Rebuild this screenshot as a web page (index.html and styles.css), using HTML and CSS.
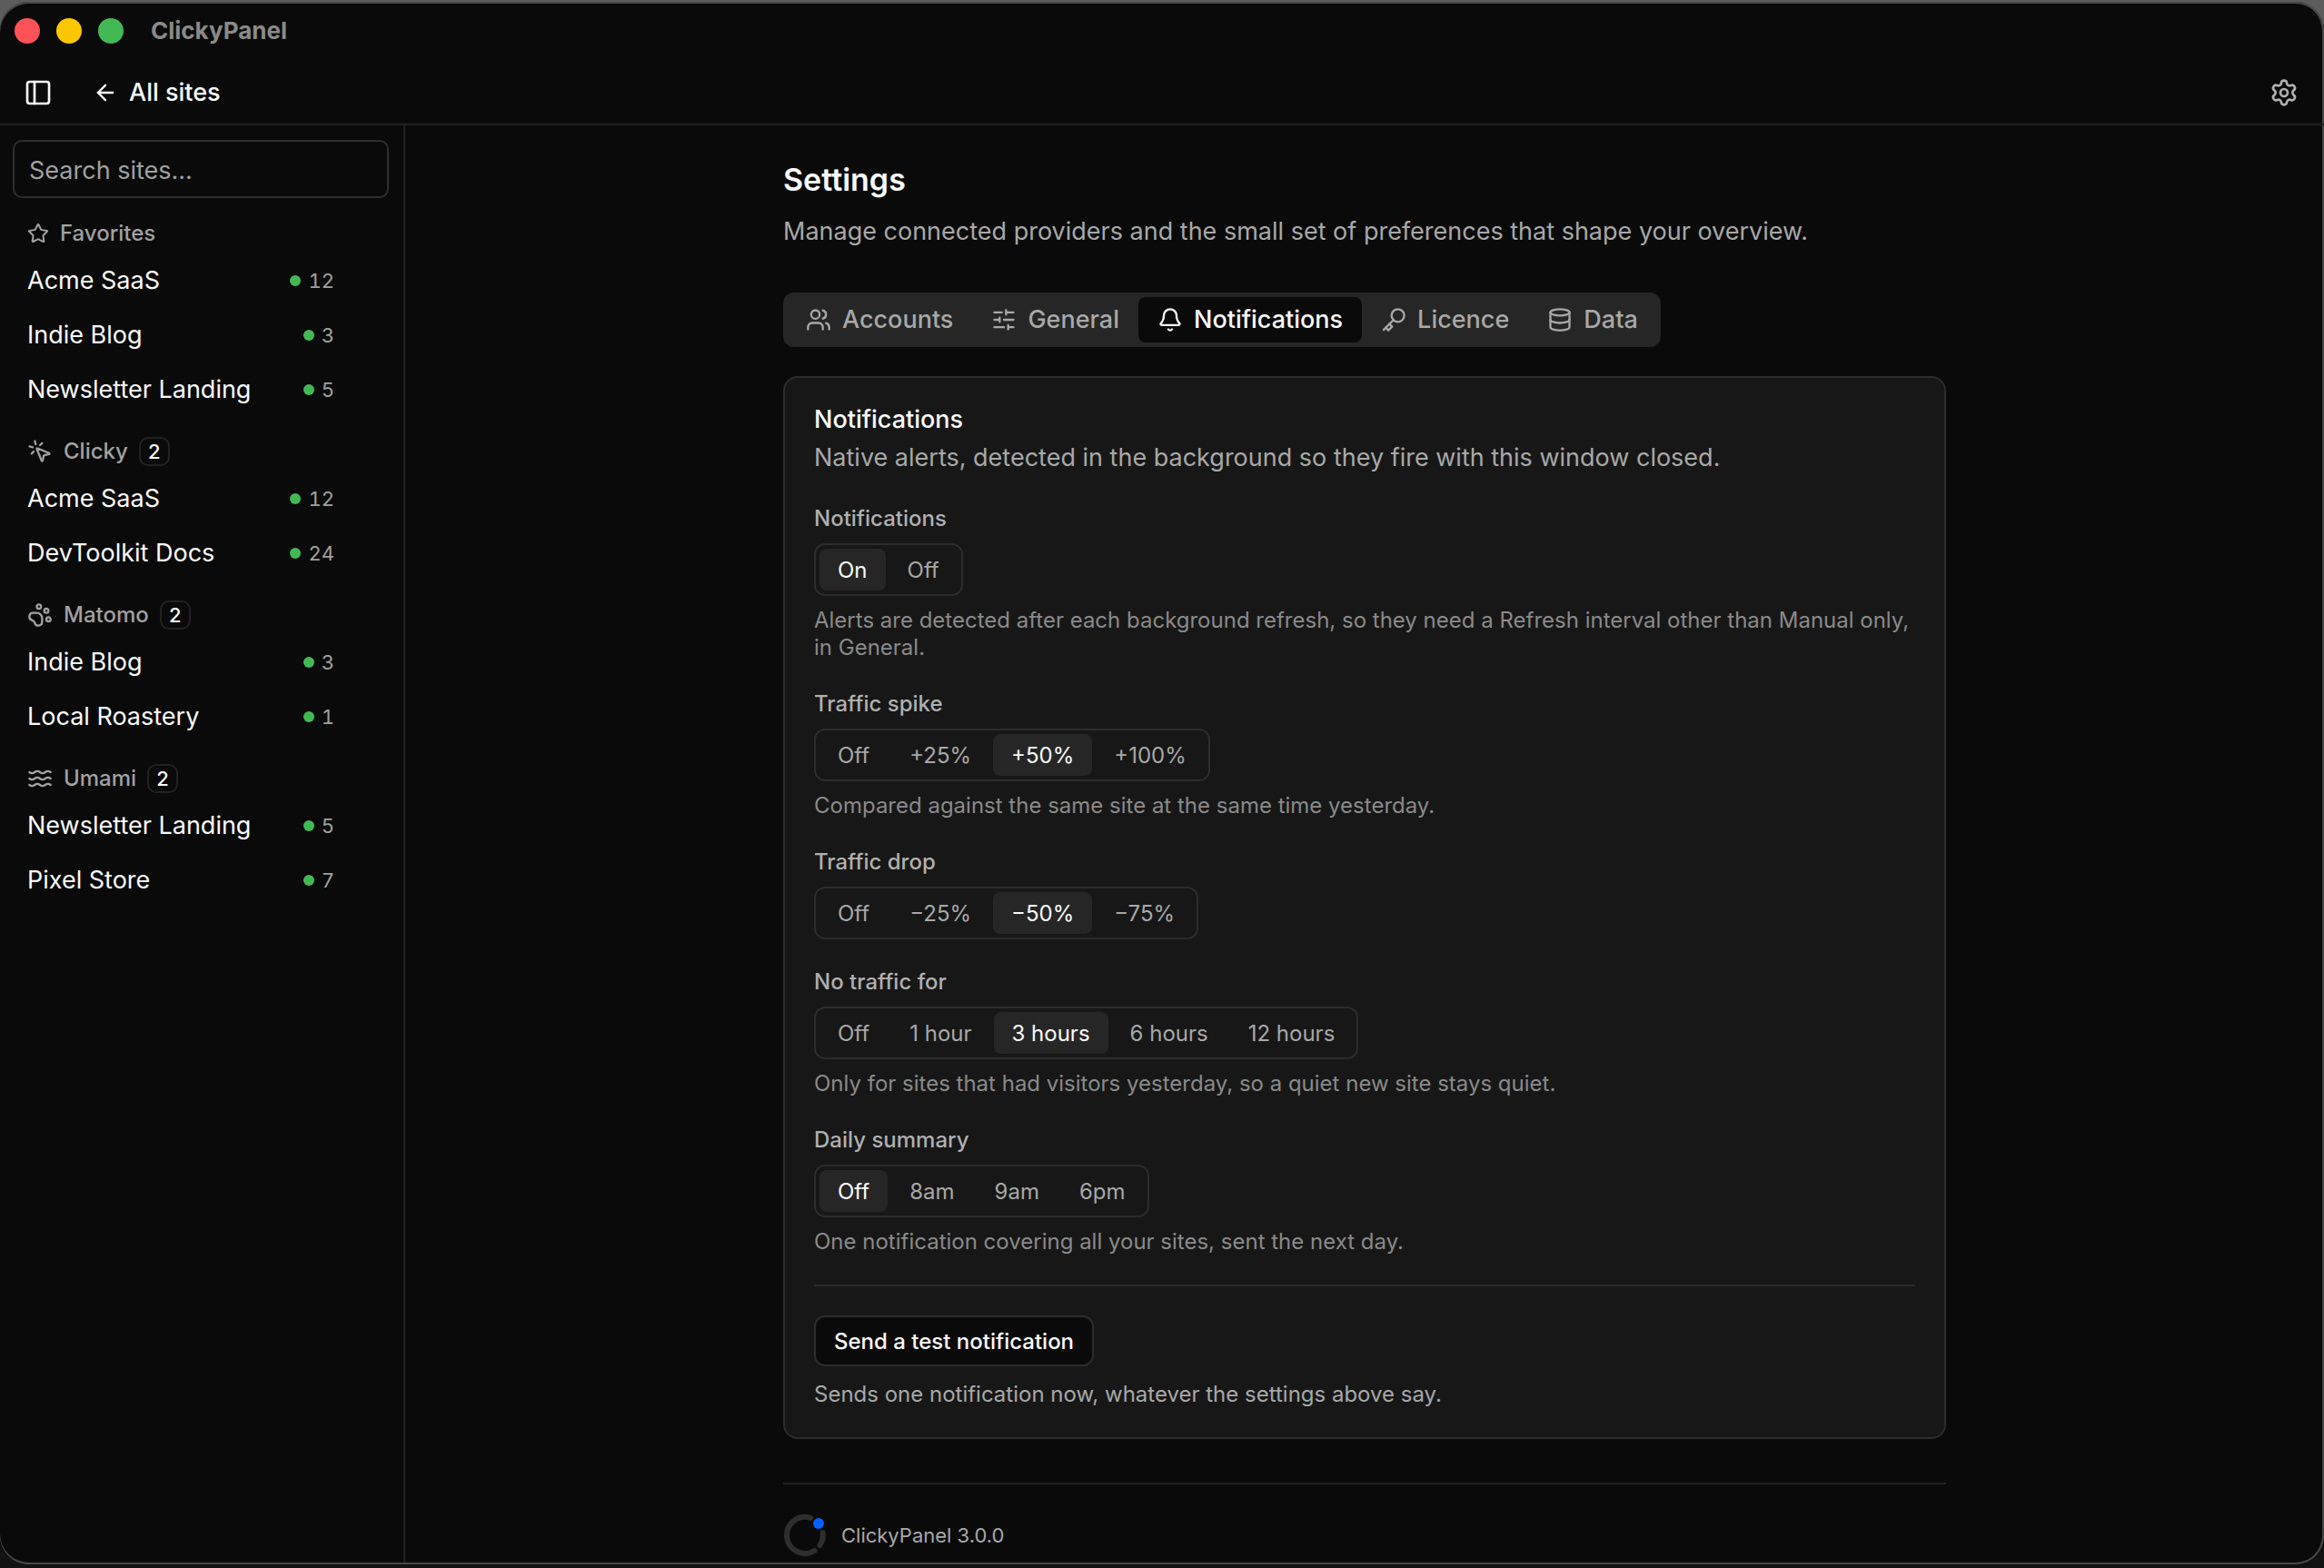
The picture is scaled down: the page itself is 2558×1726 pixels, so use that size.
FILE: index.html
```html
<!DOCTYPE html>
<html lang="en">
  <head>
    <meta charset="UTF-8" />
    <meta name="viewport" content="width=device-width, initial-scale=1.0" />
    <title>ClickyPanel</title>
    <link rel="stylesheet" href="styles.css">
  </head>
  <body>
    <div class="window">
      <header class="topbar">
        <div class="titlebar">
          <span class="light light-close"></span>
          <span class="light light-min"></span>
          <span class="light light-max"></span>
          <span class="app-title">ClickyPanel</span>
        </div>
        <div class="toolbar">
          <button class="icon-button" aria-label="Toggle sidebar">
            <svg class="icon icon-lg" viewBox="0 0 24 24"><rect x="3" y="3" width="18" height="18" rx="2" /><path d="M9 3v18" /></svg>
          </button>
          <a class="back-link" href="#">
            <svg class="icon" viewBox="0 0 24 24"><path d="m12 19-7-7 7-7" /><path d="M19 12H5" /></svg>
            All sites
          </a>
          <button class="icon-button settings-button" aria-label="Settings">
            <svg class="icon icon-lg" viewBox="0 0 24 24"><path d="M9.671 4.136a2.34 2.34 0 0 1 4.659 0 2.34 2.34 0 0 0 3.319 1.915 2.34 2.34 0 0 1 2.33 4.033 2.34 2.34 0 0 0 0 3.831 2.34 2.34 0 0 1-2.33 4.033 2.34 2.34 0 0 0-3.319 1.915 2.34 2.34 0 0 1-4.659 0 2.34 2.34 0 0 0-3.32-1.915 2.34 2.34 0 0 1-2.33-4.033 2.34 2.34 0 0 0 0-3.831A2.34 2.34 0 0 1 6.35 6.051a2.34 2.34 0 0 0 3.319-1.915" /><circle cx="12" cy="12" r="3" /></svg>
          </button>
        </div>
      </header>

      <div class="layout">
        <aside class="sidebar">
          <input class="search" type="search" placeholder="Search sites..." aria-label="Search sites" />

          <section class="group">
            <h2 class="group-title">
              <svg class="icon icon-sm" viewBox="0 0 24 24"><path d="M11.525 2.295a.53.53 0 0 1 .95 0l2.31 4.679a2.123 2.123 0 0 0 1.595 1.16l5.166.756a.53.53 0 0 1 .294.904l-3.736 3.638a2.123 2.123 0 0 0-.611 1.878l.882 5.14a.53.53 0 0 1-.771.56l-4.618-2.428a2.122 2.122 0 0 0-1.973 0L6.396 21.01a.53.53 0 0 1-.77-.56l.881-5.139a2.122 2.122 0 0 0-.611-1.879L2.16 9.795a.53.53 0 0 1 .294-.906l5.165-.755a2.122 2.122 0 0 0 1.597-1.16z" /></svg>
              Favorites
            </h2>
            <a class="site" href="#">Acme SaaS <span class="live">12</span></a>
            <a class="site" href="#">Indie Blog <span class="live">3</span></a>
            <a class="site" href="#">Newsletter Landing <span class="live">5</span></a>
          </section>

          <section class="group">
            <h2 class="group-title">
              <svg class="icon" viewBox="0 0 24 24"><path d="M14 4.1 12 6" /><path d="m5.1 8-2.9-.8" /><path d="m6 12-1.9 2" /><path d="M7.2 2.2 8 5.1" /><path d="M9.037 9.69a.498.498 0 0 1 .653-.653l11 4.5a.5.5 0 0 1-.074.949l-4.349 1.041a1 1 0 0 0-.74.739l-1.04 4.35a.5.5 0 0 1-.95.074z" /></svg>
              Clicky
              <span class="count">2</span>
            </h2>
            <a class="site" href="#">Acme SaaS <span class="live">12</span></a>
            <a class="site" href="#">DevToolkit Docs <span class="live">24</span></a>
          </section>

          <section class="group">
            <h2 class="group-title">
              <svg class="icon" viewBox="0 0 24 24"><circle cx="11" cy="4" r="2" /><circle cx="18" cy="8" r="2" /><circle cx="20" cy="16" r="2" /><path d="M9 10a5 5 0 0 1 5 5v3.5a3.5 3.5 0 0 1-6.84 1.045Q6.52 17.48 4.46 16.84A3.5 3.5 0 0 1 5.5 10Z" /></svg>
              Matomo
              <span class="count">2</span>
            </h2>
            <a class="site" href="#">Indie Blog <span class="live">3</span></a>
            <a class="site" href="#">Local Roastery <span class="live">1</span></a>
          </section>

          <section class="group">
            <h2 class="group-title">
              <svg class="icon" viewBox="0 0 24 24"><path d="M2 6c.6.5 1.2 1 2.5 1C7 7 7 5 9.5 5c2.6 0 2.4 2 5 2 2.5 0 2.5-2 5-2 1.3 0 1.9.5 2.5 1" /><path d="M2 12c.6.5 1.2 1 2.5 1 2.5 0 2.5-2 5-2 2.6 0 2.4 2 5 2 2.5 0 2.5-2 5-2 1.3 0 1.9.5 2.5 1" /><path d="M2 18c.6.5 1.2 1 2.5 1 2.5 0 2.5-2 5-2 2.6 0 2.4 2 5 2 2.5 0 2.5-2 5-2 1.3 0 1.9.5 2.5 1" /></svg>
              Umami
              <span class="count">2</span>
            </h2>
            <a class="site" href="#">Newsletter Landing <span class="live">5</span></a>
            <a class="site" href="#">Pixel Store <span class="live">7</span></a>
          </section>
        </aside>

        <main class="main">
          <div class="content">
            <h1>Settings</h1>
            <p class="lead">Manage connected providers and the small set of preferences that shape your overview.</p>

            <nav class="tabs">
              <button class="tab">
                <svg class="icon" viewBox="0 0 24 24"><path d="M16 21v-2a4 4 0 0 0-4-4H6a4 4 0 0 0-4 4v2" /><circle cx="9" cy="7" r="4" /><path d="M22 21v-2a4 4 0 0 0-3-3.87" /><path d="M16 3.13a4 4 0 0 1 0 7.75" /></svg>
                Accounts
              </button>
              <button class="tab">
                <svg class="icon" viewBox="0 0 24 24"><path d="M10 5H3M12 19H3M14 3v4M16 17v4M21 12h-9M21 19h-5M21 5h-7M8 10v4M8 12H3" /></svg>
                General
              </button>
              <button class="tab active">
                <svg class="icon" viewBox="0 0 24 24"><path d="M10.268 21a2 2 0 0 0 3.464 0" /><path d="M3.262 15.326A1 1 0 0 0 4 17h16a1 1 0 0 0 .74-1.673C19.41 13.956 18 12.499 18 8A6 6 0 0 0 6 8c0 4.499-1.411 5.956-2.738 7.326" /></svg>
                Notifications
              </button>
              <button class="tab">
                <svg class="icon" viewBox="0 0 24 24"><circle cx="16" cy="8" r="6" /><path d="M11.8 12.2 2.5 21.5" /><path d="m8 16 2.5 2.5L7 22l-2.5-2.5" /></svg>
                Licence
              </button>
              <button class="tab">
                <svg class="icon" viewBox="0 0 24 24"><ellipse cx="12" cy="5" rx="9" ry="3" /><path d="M3 5v14a9 3 0 0 0 18 0V5" /><path d="M3 12a9 3 0 0 0 18 0" /></svg>
                Data
              </button>
            </nav>

            <section class="card">
              <div class="card-head">
                <h2>Notifications</h2>
                <p>Native alerts, detected in the background so they fire with this window closed.</p>
              </div>

              <div class="field" role="group" aria-labelledby="f-notifications">
                <h3 id="f-notifications">Notifications</h3>
                <div class="segmented">
                  <button class="active">On</button>
                  <button>Off</button>
                </div>
                <p class="help">Alerts are detected after each background refresh, so they need a Refresh interval other than Manual only, in General.</p>
              </div>

              <div class="field" role="group" aria-labelledby="f-spike">
                <h3 id="f-spike">Traffic spike</h3>
                <div class="segmented">
                  <button>Off</button>
                  <button>+25%</button>
                  <button class="active">+50%</button>
                  <button>+100%</button>
                </div>
                <p class="help">Compared against the same site at the same time yesterday.</p>
              </div>

              <div class="field" role="group" aria-labelledby="f-drop">
                <h3 id="f-drop">Traffic drop</h3>
                <div class="segmented">
                  <button>Off</button>
                  <button>−25%</button>
                  <button class="active">−50%</button>
                  <button>−75%</button>
                </div>
              </div>

              <div class="field" role="group" aria-labelledby="f-quiet">
                <h3 id="f-quiet">No traffic for</h3>
                <div class="segmented">
                  <button>Off</button>
                  <button>1 hour</button>
                  <button class="active">3 hours</button>
                  <button>6 hours</button>
                  <button>12 hours</button>
                </div>
                <p class="help">Only for sites that had visitors yesterday, so a quiet new site stays quiet.</p>
              </div>

              <div class="field" role="group" aria-labelledby="f-summary">
                <h3 id="f-summary">Daily summary</h3>
                <div class="segmented">
                  <button class="active">Off</button>
                  <button>8am</button>
                  <button>9am</button>
                  <button>6pm</button>
                </div>
                <p class="help">One notification covering all your sites, sent the next day.</p>
              </div>

              <div class="test">
                <button class="test-button">Send a test notification</button>
                <p>Sends one notification now, whatever the settings above say.</p>
              </div>
            </section>

            <footer class="footer">
              <svg class="logo" viewBox="0 0 48 48">
                <path class="ring" d="M30 4.9A20 20 0 1 0 34.5 41" />
                <path class="ring" d="M43.6 21A20 20 0 0 1 40.4 35" />
                <circle class="spot" cx="39" cy="11" r="6" />
              </svg>
              <span>ClickyPanel 3.0.0</span>
            </footer>
          </div>
        </main>
      </div>
    </div>
  </body>
</html>
```
FILE: styles.css
```css
* {
  box-sizing: border-box;
}

body {
  margin: 0;
  height: 100vh;
  padding: 2px 0 4px;
  overflow: hidden;
  background: linear-gradient(#5c5c5c 50%, #121212 50%);
  color: #fafafa;
  font-family: Inter, "Liberation Sans", sans-serif;
  font-size: 27px;
  line-height: 40px;
}

h1, h2, h3, p {
  margin: 0;
}

button, input {
  font: inherit;
  color: inherit;
}

button {
  border: none;
  background: none;
  padding: 0;
  cursor: pointer;
}

a {
  color: inherit;
  text-decoration: none;
}

.window {
  height: 100%;
  display: flex;
  flex-direction: column;
  padding: 2px 0;
  overflow: hidden;
  border-radius: 32px;
  background: #0a0a0a;
  box-shadow: inset -1px 0 0 1px #484848, inset 0 2px #484848, inset 0 -2px #484848;
}

.icon {
  width: 28px;
  height: 28px;
  flex: none;
  fill: none;
  stroke: currentColor;
  stroke-width: 2;
  stroke-linecap: round;
  stroke-linejoin: round;
}

.icon-sm {
  width: 24px;
  height: 24px;
}

.icon-lg {
  width: 32px;
  height: 32px;
}

/* top bar */
.topbar {
  border-bottom: 2px solid #222;
}

.titlebar {
  display: flex;
  align-items: center;
  gap: 18px;
  height: 60px;
  padding: 0 16px;
}

.light {
  width: 28px;
  height: 28px;
  border-radius: 50%;
}

.light-close {
  background: #ff5257;
}

.light-min {
  background: #fdc700;
}

.light-max {
  background: #42b855;
}

.app-title {
  margin-left: 12px;
  color: #8a8a8a;
  font-size: 26px;
  font-weight: 700;
}

.toolbar {
  display: flex;
  align-items: center;
  height: 72px;
  padding: 4px 28px 0 26px;
}

.icon-button {
  display: flex;
}

.back-link {
  display: flex;
  align-items: center;
  gap: 12px;
  margin-left: 44px;
  font-weight: 500;
}

.settings-button {
  margin-left: auto;
  color: #b0b0b0;
}

.layout {
  display: flex;
  flex: 1;
  min-height: 0;
}

/* sidebar */
.sidebar {
  width: 446px;
  flex: none;
  padding: 16px 16px 16px 14px;
  border-right: 2px solid #222;
}

.search {
  display: block;
  width: 100%;
  height: 64px;
  padding: 2px 16px 0;
  border: 2px solid #2e2e2e;
  border-radius: 10px;
  background: transparent;
}

.search::placeholder {
  color: #a1a1a1;
}

.group {
  margin-top: 16px;
}

.group-title {
  display: flex;
  align-items: center;
  gap: 12px;
  height: 44px;
  padding: 2px 16px 0;
  color: #a1a1a1;
  font-size: 24px;
  font-weight: 500;
}

.count {
  min-width: 34px;
  height: 32px;
  border: 2px solid #222;
  border-radius: 10px;
  color: #fafafa;
  font-size: 22px;
  line-height: 28px;
  text-align: center;
}

.site {
  display: flex;
  align-items: center;
  justify-content: space-between;
  height: 60px;
  padding: 1px 60px 0 16px;
}

.live {
  display: flex;
  align-items: center;
  gap: 8px;
  color: #a1a1a1;
  font-size: 22px;
  font-variant-numeric: tabular-nums;
}

.live::before {
  content: "";
  width: 12px;
  height: 12px;
  border-radius: 50%;
  background: #42b855;
}

/* settings page */
.main {
  flex: 1;
  padding-top: 40px;
}

.content {
  max-width: 1280px;
  margin: 0 auto;
}

h1 {
  font-size: 34px;
  font-weight: 600;
}

.lead {
  margin: 17px 0 47px;
  color: #a8a8a8;
}

.tabs {
  display: inline-flex;
  height: 60px;
  padding: 5px 4px;
  border-radius: 12px;
  background: #262626;
}

.tab {
  display: flex;
  align-items: center;
  gap: 12px;
  padding: 0 21px;
  border-radius: 8px;
  color: #a8a8a8;
  font-weight: 500;
}

.tab.active {
  background: #0a0a0a;
  color: #fafafa;
}

.card {
  display: flex;
  flex-direction: column;
  gap: 32px;
  margin-top: 32px;
  padding: 32px;
  border: 2px solid #2c2c2c;
  border-radius: 16px;
  background: #171717;
}

.card-head h2 {
  margin-bottom: 8px;
  font-size: 27px;
  font-weight: 500;
  line-height: 28px;
}

.card-head p {
  color: #a8a8a8;
}

.field, .test {
  display: flex;
  flex-direction: column;
  align-items: flex-start;
  gap: 12px;
  font-size: 24px;
  line-height: 30px;
}

.field h3 {
  color: #b0b0b0;
  font-size: 24px;
  font-weight: 500;
}

.segmented {
  display: flex;
  gap: 4px;
  padding: 4px;
  border: 2px solid #2c2c2c;
  border-radius: 12px;
}

.segmented button {
  height: 46px;
  padding: 2px 20px 0;
  border-radius: 8px;
  color: #a8a8a8;
}

.segmented .active {
  background: #262626;
  color: #fafafa;
}

.help {
  color: #8a8a8a;
}

.test {
  gap: 16px;
  padding-top: 32px;
  border-top: 2px solid #2c2c2c;
  color: #a8a8a8;
}

.test-button {
  height: 56px;
  padding: 2px 20px 0;
  border: 2px solid #2c2c2c;
  border-radius: 12px;
  background: #0a0a0a;
  color: #fafafa;
  font-weight: 500;
}

.footer {
  display: flex;
  align-items: center;
  gap: 16px;
  margin-top: 48px;
  padding-top: 32px;
  border-top: 2px solid #222;
  color: #a8a8a8;
  font-size: 22px;
}

.logo {
  width: 48px;
  height: 48px;
}

.ring {
  fill: none;
  stroke: #2e2e2e;
  stroke-width: 6;
  stroke-linecap: round;
}

.spot {
  fill: #0561ff;
}
```
